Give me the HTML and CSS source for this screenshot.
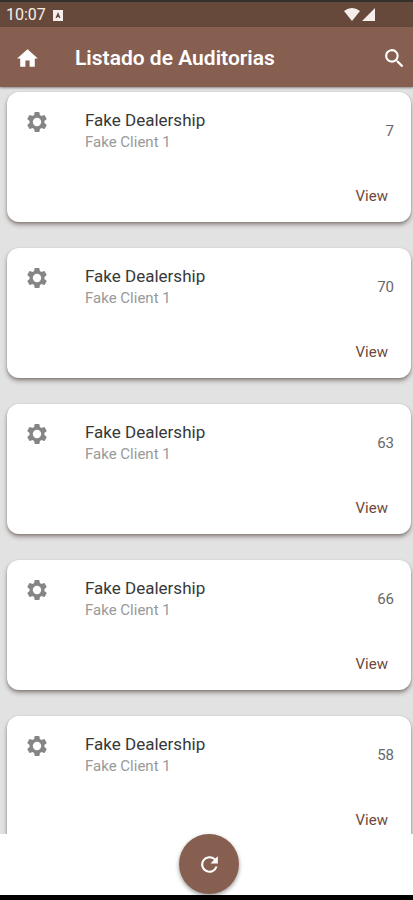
FILE: index.html
```html
<!DOCTYPE html>
<html lang="es">
<head>
<meta charset="utf-8">
<meta name="viewport" content="width=device-width, initial-scale=1">
<title>Listado de Auditorias</title>
<link rel="stylesheet" href="styles.css">
</head>
<body>
<svg hidden>
  <symbol id="gear" viewBox="0 0 24 24">
    <path fill-rule="evenodd" d="M19.4 13a7.800 7.800 0 0 0 0-2l2.100-1.650a.5.5 0 0 0 .12-.64l-2-3.460a.5.5 0 0 0-.61-.22l-2.490 1a7.300 7.300 0 0 0-1.690-.98l-.38-2.650A.49.49 0 0 0 14 2h-4a.49.49 0 0 0-.49.42l-.38 2.650c-.61.25-1.170.59-1.690.98l-2.490-1a.5.5 0 0 0-.61.22l-2 3.460a.5.5 0 0 0 .12.64L4.600 11a7.800 7.800 0 0 0 0 2l-2.110 1.650a.5.5 0 0 0-.12.64l2 3.460c.12.220.39.3.61.22l2.490-1c.52.4 1.080.73 1.690.98l.38 2.650c.03.240.24.4.49.4h4c.25 0 .46-.18.49-.42l.38-2.650a7.300 7.300 0 0 0 1.690-.98l2.490 1c.23.09.49 0 .61-.22l2-3.460a.5.5 0 0 0-.12-.64zM12 16.200a4.200 4.200 0 1 0 0-8.400 4.200 4.200 0 0 0 0 8.400z"/>
  </symbol>
</svg>
<div class="status">
  <span class="time">10:07</span>
  <svg class="badge" viewBox="0 0 12 12" aria-hidden="true"><path fill-rule="evenodd" d="M1 1h10v11H1zM6 3 3.500 9H5l.4-1h1.300L7 9h1.500z"/></svg>
  <svg class="signals" viewBox="0 0 32 14" aria-hidden="true"><path d="M0 3Q8-3 16 3L8 13zM31 0v13H18z"/></svg>
</div>
<header class="appbar">
  <button class="icon-button" type="button" aria-label="Inicio"><svg viewBox="0 0 24 24"><path d="M10 20v-6h4v6h5v-8h3L12 3 2 12h3v8z"/></svg></button>
  <h1 class="title">Listado de Auditorias</h1>
  <button class="icon-button" type="button" aria-label="Buscar"><svg viewBox="0 0 24 24"><path d="M15.500 14h-.79l-.28-.27A6.500 6.500 0 1 0 13.730 14.430l.27.28v.79l5 4.990L20.490 19zM9.500 14a4.500 4.500 0 1 1 0-9 4.500 4.500 0 0 1 0 9z"/></svg></button>
</header>
<main class="list">
  <article class="card">
    <svg class="gear" aria-hidden="true"><use href="#gear"/></svg>
    <div class="info"><h2 class="name">Fake Dealership</h2><p class="client">Fake Client 1</p></div>
    <span class="count">7</span>
    <button class="view" type="button">View</button>
  </article>
  <article class="card">
    <svg class="gear" aria-hidden="true"><use href="#gear"/></svg>
    <div class="info"><h2 class="name">Fake Dealership</h2><p class="client">Fake Client 1</p></div>
    <span class="count">70</span>
    <button class="view" type="button">View</button>
  </article>
  <article class="card">
    <svg class="gear" aria-hidden="true"><use href="#gear"/></svg>
    <div class="info"><h2 class="name">Fake Dealership</h2><p class="client">Fake Client 1</p></div>
    <span class="count">63</span>
    <button class="view" type="button">View</button>
  </article>
  <article class="card">
    <svg class="gear" aria-hidden="true"><use href="#gear"/></svg>
    <div class="info"><h2 class="name">Fake Dealership</h2><p class="client">Fake Client 1</p></div>
    <span class="count">66</span>
    <button class="view" type="button">View</button>
  </article>
  <article class="card">
    <svg class="gear" aria-hidden="true"><use href="#gear"/></svg>
    <div class="info"><h2 class="name">Fake Dealership</h2><p class="client">Fake Client 1</p></div>
    <span class="count">58</span>
    <button class="view" type="button">View</button>
  </article>
</main>
<footer class="bottom">
  <button class="refresh" type="button" aria-label="Actualizar"><svg viewBox="0 0 24 24"><path d="M17.650 6.350A8 8 0 1 0 19.730 14h-2.080A6 6 0 1 1 12 6c1.660 0 3.140.69 4.220 1.780L13 11h7V4z"/></svg></button>
</footer>
</body>
</html>
```
FILE: styles.css
```css
* {
  box-sizing: border-box;
}

body {
  display: flex;
  flex-direction: column;
  height: 100vh;
  margin: 0;
  overflow: hidden;
  background: #fff;
  font-family: Roboto, "Liberation Sans", sans-serif;
}

svg {
  display: block;
  fill: currentColor;
}

svg[hidden] {
  display: none;
}

h1, h2, p {
  margin: 0;
}

button {
  padding: 0;
  border: 0;
  background: none;
  font: inherit;
  color: inherit;
  cursor: pointer;
}

.status {
  display: flex;
  flex: none;
  align-items: center;
  height: 27px;
  padding: 0 37px 0 6px;
  border-top: 2px solid #35302c;
  background: #67493c;
  color: #f5eeeb;
}

.time {
  font-size: 16px;
  line-height: 20px;
}

.badge {
  width: 12px;
  height: 12px;
  margin-left: 6px;
}

.signals {
  width: 32px;
  height: 14px;
  margin-left: auto;
}

.appbar {
  z-index: 1;
  display: flex;
  flex: none;
  align-items: center;
  height: 60px;
  padding: 2px 6px 0 15px;
  background: #875f51;
  box-shadow: 0 1px 2px #0006;
  color: #fff;
}

.icon-button svg {
  width: 25px;
  height: 25px;
}

.title {
  flex: 1;
  margin-left: 35px;
  font-size: 21px;
  font-weight: 600;
  line-height: 28px;
}

.list {
  display: flex;
  flex: 1;
  flex-direction: column;
  gap: 26px;
  min-height: 0;
  padding: 5px 2px 0 7px;
  overflow: hidden;
  background: #e2e2e2;
}

.card {
  display: grid;
  flex: none;
  grid-template-rows: 1fr auto;
  grid-template-columns: 48px 1fr auto;
  column-gap: 12px;
  min-height: 130px;
  padding: 17px 17px 14px 18px;
  border-radius: 12px;
  background: #fff;
  box-shadow: 0 3px 4px #54454080, 0 1px 2px #5445404d;
}

.gear {
  width: 24px;
  height: 24px;
  margin-top: 1px;
  color: #858585;
}

.name {
  color: #383838;
  font-size: 17px;
  font-weight: 400;
  line-height: 22px;
}

.client {
  color: #999;
  font-size: 15px;
  font-weight: 400;
  line-height: 22px;
}

.count {
  padding-top: 11px;
  color: #686868;
  font-size: 15px;
  line-height: 22px;
}

.view {
  grid-row: 2;
  grid-column: 2 / 4;
  justify-self: end;
  margin-right: 6px;
  color: #70483c;
  font-size: 15px;
  line-height: 24px;
}

.bottom {
  display: flex;
  flex: none;
  justify-content: center;
  height: 66px;
  padding-left: 5px;
  border-bottom: 5px solid #000;
  background: #fff;
}

.refresh {
  display: grid;
  place-items: center;
  width: 60px;
  height: 60px;
  border-radius: 50%;
  background: #875f51;
  box-shadow: 0 2px 4px #0006;
  color: #fff;
}

.refresh svg {
  width: 25px;
  height: 25px;
}
```
